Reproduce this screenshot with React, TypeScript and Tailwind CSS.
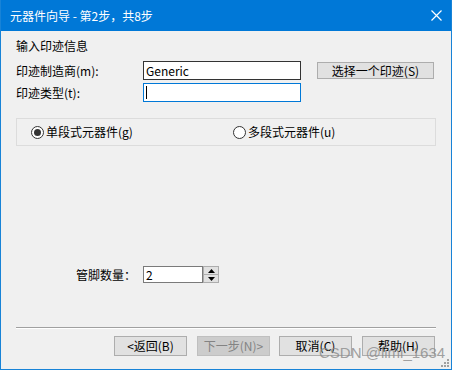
import React from 'react';

const Btn: React.FC<{ label: string; disabled?: boolean; className?: string }> = ({ label, disabled, className }) => (
  <div
    className={`h-[20px] w-[73px] flex items-center justify-center border text-[12px] leading-none ${
      disabled ? 'bg-[#cccccc] border-[#bfbfbf] text-[#838383]' : 'bg-[#e1e1e1] border-[#adadad] text-black'
    } ${className ?? ''}`}
  >
    {label}
  </div>
);

const Radio: React.FC<{ checked?: boolean; label: string }> = ({ checked, label }) => (
  <div className="flex items-center">
    <div className="w-[13px] h-[13px] rounded-full border border-[#333] bg-white flex items-center justify-center">
      {checked && <div className="w-[7px] h-[7px] rounded-full bg-[#333]" />}
    </div>
    <span className="ml-[2px] text-[12px] leading-4">{label}</span>
  </div>
);

export default function App() {
  return (
    <div className="relative w-[452px] h-[370px] bg-[#f0f0f0] border-x border-b border-[#1883d7] flex flex-col text-black overflow-hidden font-['Noto_Sans_CJK_SC','Noto_Sans',sans-serif]">
      {/* title bar */}
      <div className="h-[31px] bg-[#0078d7] text-white flex items-center pl-[9px] -mx-px pr-[10px] shrink-0">
        <span className="text-[12px] leading-4 pl-px">元器件向导 - 第2步，共8步</span>
        <svg className="ml-auto" width="11" height="11" viewBox="0 0 11 11">
          <path d="M0.5 0.5 L10.5 10.5 M10.5 0.5 L0.5 10.5" stroke="white" strokeWidth="1.2" />
        </svg>
      </div>

      <div className="flex flex-col px-[15px]">
        <div className="pt-[7px] text-[12px] leading-4">输入印迹信息</div>

        <div className="mt-[7px] flex items-center h-[19px]">
          <div className="w-[127px] text-[12px] leading-4">印迹制造商(m):</div>
          <div className="w-[158px] h-[19px] border border-[#333] bg-white flex items-center pl-[2px] text-[12px]">
            Generic
          </div>
          <div className="ml-[16px] w-[117px] h-[17px] bg-[#e1e1e1] border border-[#adadad] flex items-center justify-center text-[12px]">
            选择一个印迹(S)
          </div>
        </div>

        <div className="mt-[3px] flex items-center h-[19px]">
          <div className="w-[127px] text-[12px] leading-4">印迹类型(t):</div>
          <div className="w-[158px] h-[19px] border border-[#0078d7] bg-white flex items-center pl-[2px]">
            <div className="w-px h-[13px] bg-black" />
          </div>
        </div>

        <div className="mt-[16px] w-[420px] h-[28px] border border-[#dcdcdc] flex items-center">
          <div className="ml-[14px] w-[202px]">
            <Radio checked label="单段式元器件(g)" />
          </div>
          <Radio label="多段式元器件(u)" />
        </div>

        <div className="mt-[120px] flex items-center h-[17px]">
          <div className="ml-[60px] w-[67px] text-[12px] leading-4">管脚数量：</div>
          <div className="w-[60px] h-[17px] border border-[#7a7a7a] bg-white flex items-center pl-[2px] text-[12px]">2</div>
          <div className="w-[16px] h-[17px] flex flex-col border border-[#adadad] bg-[#e1e1e1]">
            <div className="flex-1 flex items-center justify-center border-b border-[#adadad]">
              <svg width="7" height="4" viewBox="0 0 7 4"><path d="M3.5 0 L7 4 L0 4 Z" fill="#000" /></svg>
            </div>
            <div className="flex-1 flex items-center justify-center">
              <svg width="7" height="4" viewBox="0 0 7 4"><path d="M0 0 L7 0 L3.5 4 Z" fill="#000" /></svg>
            </div>
          </div>
        </div>

        <div className="mt-[44px] w-[420px] border-t border-b border-t-[#a0a0a0] border-b-white" />

        <div className="mt-[7px] flex items-center">
          <Btn label="<返回(B)" className="ml-[98px]" />
          <Btn label="下一步(N)>" disabled className="ml-[10px]" />
          <Btn label="取消(C)" className="ml-[9px]" />
          <Btn label="帮助(H)" className="ml-[10px]" />
        </div>
      </div>

      {/* watermark */}
      <div className="absolute left-[318px] top-[343px] text-[15px] leading-5 text-[#8a8a8a]/80 whitespace-nowrap font-['Liberation_Sans',sans-serif]">
        CSDN @limi_1634
      </div>

      {/* size grip */}
      <svg className="absolute right-[2px] bottom-[2px]" width="8" height="8" viewBox="0 0 8 8">
        <rect x="6" y="0" width="2" height="2" fill="#a0a0a0" />
        <rect x="3" y="3" width="2" height="2" fill="#a0a0a0" />
        <rect x="6" y="3" width="2" height="2" fill="#a0a0a0" />
        <rect x="0" y="6" width="2" height="2" fill="#a0a0a0" />
        <rect x="3" y="6" width="2" height="2" fill="#a0a0a0" />
        <rect x="6" y="6" width="2" height="2" fill="#a0a0a0" />
      </svg>
    </div>
  );
}
